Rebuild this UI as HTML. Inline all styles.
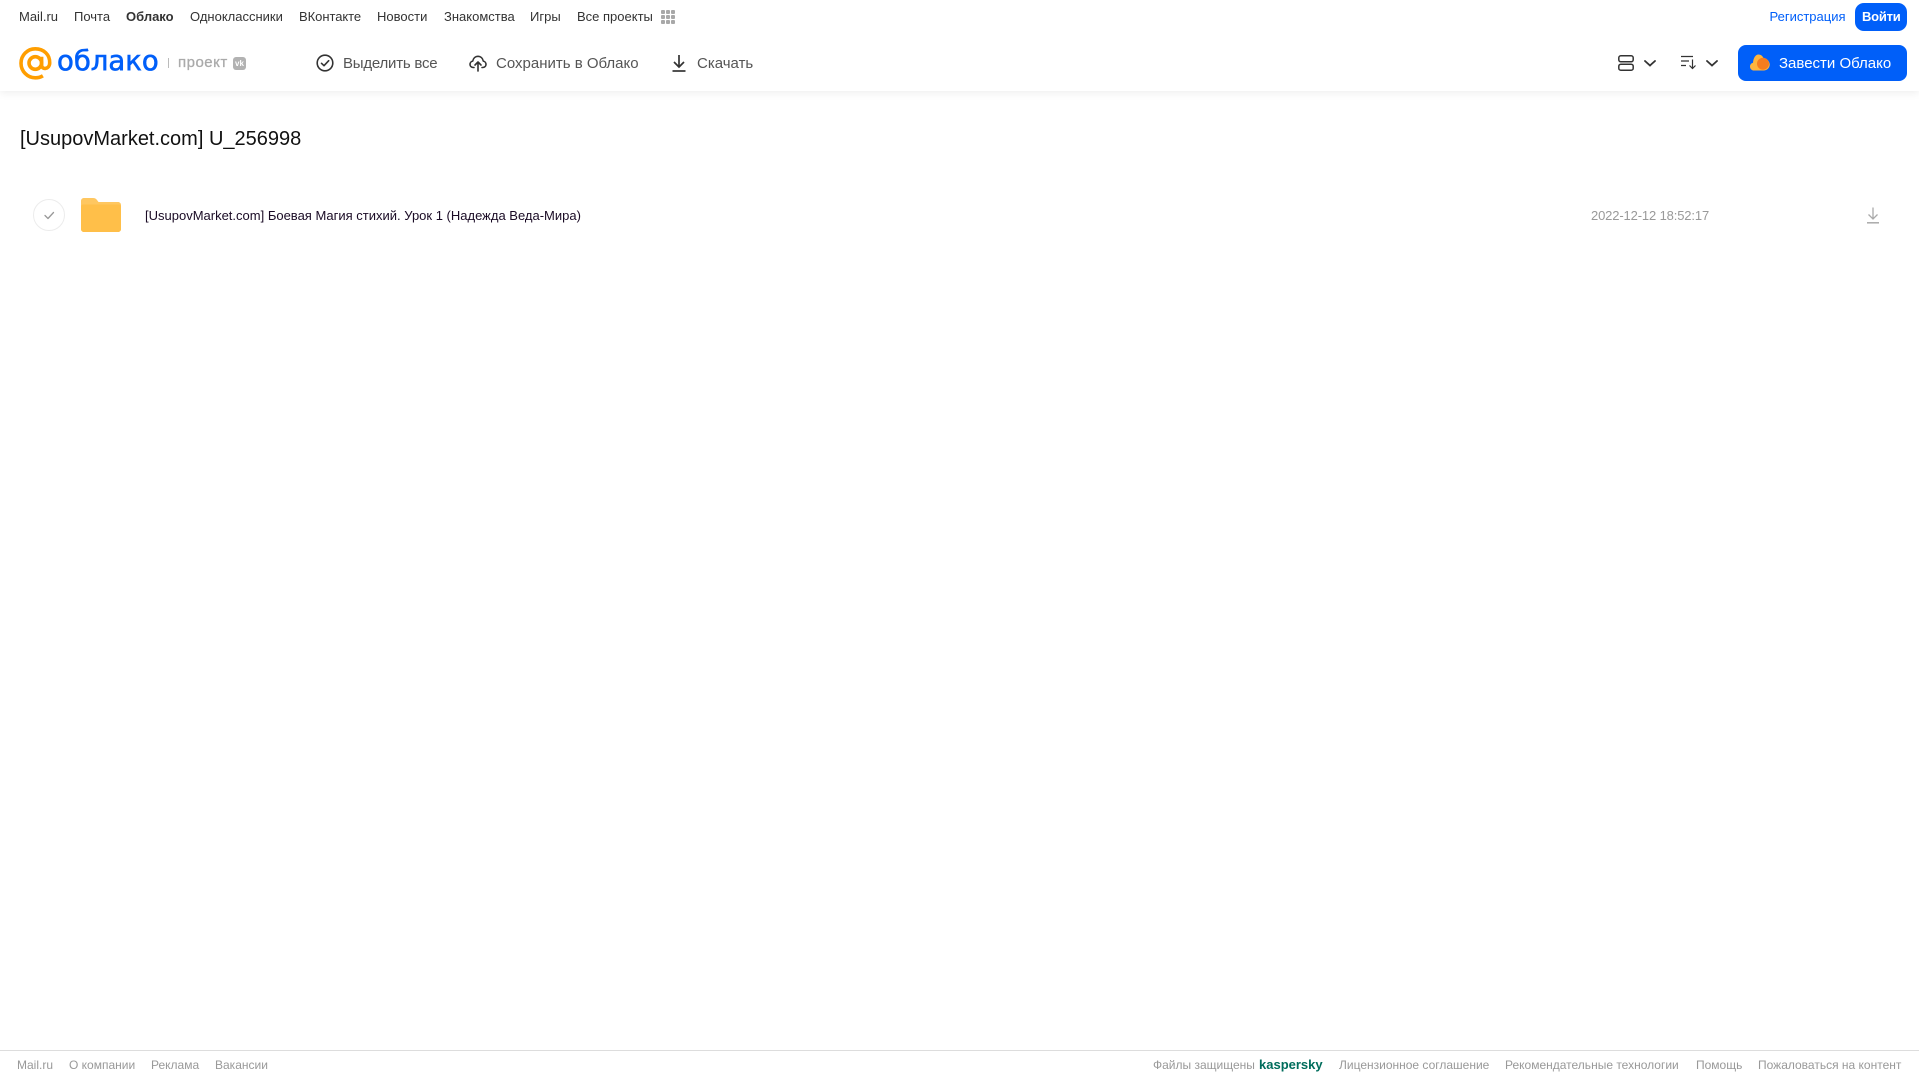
<!DOCTYPE html>
<html lang="ru"><head><meta charset="utf-8"><title>Облако</title>
<style>
html,body{margin:0;padding:0;background:#fff}
body{position:relative;width:1919px;height:1079px;overflow:hidden;font-family:"Liberation Sans",Arial,sans-serif}
.t{position:absolute;white-space:nowrap;line-height:20px;height:20px}
.n{top:7px;font-size:13px;color:#333}
.b{top:54px;font-size:15px;color:#555}
.f{top:1055px;font-size:12px;color:#999}
svg{position:absolute;display:block}
.hdr{position:absolute;left:0;top:0;width:1919px;height:91px;background:#fff;box-shadow:0 2px 8px rgba(0,0,0,.07)}
</style></head><body>
<div class="hdr"></div>
<span class="t n" style="left:19px">Mail.ru</span>
<span class="t n" style="left:74px">Почта</span>
<span class="t n" style="left:126px;font-weight:bold">Облако</span>
<span class="t n" style="left:190px">Одноклассники</span>
<span class="t n" style="left:299px;letter-spacing:-.05px">ВКонтакте</span>
<span class="t n" style="left:377px">Новости</span>
<span class="t n" style="left:444px">Знакомства</span>
<span class="t n" style="left:530px">Игры</span>
<span class="t n" style="left:577px">Все проекты</span>
<svg style="left:661px;top:10px" width="14" height="14" fill="#a8a8a8"><rect width="4" height="4" rx="1"/><rect x="5" width="4" height="4" rx="1"/><rect x="10" width="4" height="4" rx="1"/><rect y="5" width="4" height="4" rx="1"/><rect x="5" y="5" width="4" height="4" rx="1"/><rect x="10" y="5" width="4" height="4" rx="1"/><rect y="10" width="4" height="4" rx="1"/><rect x="5" y="10" width="4" height="4" rx="1"/><rect x="10" y="10" width="4" height="4" rx="1"/></svg>
<span class="t n" style="left:1769.500px;color:#005ff9">Регистрация</span>
<div style="position:absolute;left:1855px;top:3px;width:52px;height:28px;background:#005ff9;border-radius:9px"></div>
<span class="t n" style="left:1862px;color:#fff;font-weight:bold;top:7px;letter-spacing:-.25px">Войти</span>

<svg style="left:19px;top:47px" width="33" height="33" viewBox="0 0 33 33" fill="none" stroke="#ff9e00" stroke-width="3.6"><circle cx="16.3" cy="16" r="6.3"/><path d="M22.6 9.8v8.2c0 5.2 7.9 4.5 8.1-2 .3-8.400-6-14.200-14.400-14.200C8.400 1.800 2 8.200 2 16.200s6.400 14.600 14.300 14.600c2.900 0 5.400-.7 7.600-2"/></svg>
<span class="t" style="left:57px;top:44px;height:34px;line-height:34px;font-family:'DejaVu Sans',sans-serif;font-size:27.500px;color:#005ff9;-webkit-text-stroke:.6px #005ff9">облако</span>
<div style="position:absolute;left:168px;top:58px;width:1px;height:10px;background:#bbb"></div>
<span class="t" style="left:178px;top:53px;font-size:15px;letter-spacing:.5px;color:#aaa;-webkit-text-stroke:.3px #aaa">проект</span>
<div style="position:absolute;left:233px;top:57px;width:13px;height:13px;border-radius:3px;background:#b2b2b2;color:#fff;font:bold 8px/13px 'Liberation Sans',sans-serif;text-align:center">vk</div>

<svg style="left:316px;top:54px" width="18" height="18" viewBox="0 0 18 18" fill="none" stroke="#333" stroke-width="1.6"><circle cx="9" cy="9" r="7.800"/><path d="M5.500 9.300l2.500 2.400 4.700-5" stroke-linecap="round" stroke-linejoin="round"/></svg>
<span class="t b" style="left:343px;letter-spacing:-.22px">Выделить все</span>
<svg style="left:469px;top:54px" width="18" height="18" viewBox="0 0 18 18" fill="none" stroke="#333" stroke-width="1.600" stroke-linecap="round" stroke-linejoin="round"><path d="M5 13.500H4.300C2.400 13.500 1 12.100 1 10.300c0-1.600 1.200-2.900 2.700-3.200C4.300 4.200 6.400 2.300 9 2.300s4.700 1.900 5.300 4.800c1.500.3 2.700 1.600 2.700 3.200 0 1.800-1.400 3.200-3.300 3.200H13"/><path d="M9 17V8.500M6 11l3-3 3 3"/></svg>
<span class="t b" style="left:496px">Сохранить в Облако</span>
<svg style="left:671px;top:54px" width="16" height="18" viewBox="0 0 16 18" fill="none" stroke="#333" stroke-width="1.700"><path d="M8 1v11.500M3 8l5 5 5-5"/><path d="M1.500 17h13"/></svg>
<span class="t b" style="left:697px">Скачать</span>

<svg style="left:1618px;top:55px" width="16" height="16" viewBox="0 0 16 16" fill="none" stroke="#333" stroke-width="1.500"><rect x=".8" y=".8" width="14.400" height="6" rx="2"/><rect x=".8" y="9.200" width="14.400" height="6" rx="2"/></svg>
<svg style="left:1644px;top:60px" width="12" height="7" viewBox="0 0 12 7" fill="none" stroke="#333" stroke-width="1.800" stroke-linecap="round"><path d="M1 1l5 4.500L11 1"/></svg>
<svg style="left:1681px;top:55px" width="16" height="15" viewBox="0 0 16 15" fill="none" stroke="#333" stroke-width="1.200"><path d="M0 1.500h12M0 6h8M0 10.500h5"/><path d="M11.500 4.500v9M8.500 10.500l3 3 3-3"/></svg>
<svg style="left:1706px;top:60px" width="12" height="7" viewBox="0 0 12 7" fill="none" stroke="#333" stroke-width="1.800" stroke-linecap="round"><path d="M1 1l5 4.500L11 1"/></svg>

<div style="position:absolute;left:1738px;top:45px;width:169px;height:36px;background:#005ff9;border-radius:8px"></div>
<svg style="left:1750px;top:54px" width="20" height="17" viewBox="0 0 20 17"><path d="M4 16.500C1.800 16.500 0 14.800 0 12.600c0-1.900 1.200-3.400 3-3.800C3.300 4 5.500.5 8.500.5c2.300 0 4.200 1.500 5 3.700 3.300.2 6.200 3 6.200 6.300 0 3.300-2.700 6-6 6z" fill="#ffb53d"/><circle cx="13" cy="9.700" r="6" fill="#f57d20"/></svg>
<span class="t b" style="left:1779px;color:#fff">Завести Облако</span>

<span class="t" style="left:20px;top:127px;height:24px;line-height:24px;font-size:20px;color:#111">[UsupovMarket.com] U_256998</span>

<svg style="left:33px;top:198px" width="33" height="34" viewBox="0 0 33 34" fill="none"><circle cx="16" cy="17" r="15.500" stroke="#ececec"/><path d="M12 17.500l3 3 5.500-6" stroke="#999" stroke-width="1.300" stroke-linecap="round" stroke-linejoin="round"/></svg>
<svg style="left:81px;top:197px" width="40" height="35" viewBox="0 0 40 35"><path d="M0 4C0 2 1.500 1 3 1h9c2 0 3 .6 4 2l1.500 2H37c1.700 0 3 1.200 3 3v24c0 1.700-1.300 3-3 3H3c-1.700 0-3-1.300-3-3z" fill="#ffc760"/><path d="M0 9.500c0-1 1-2 2-2h36c1 0 2 1 2 2V32c0 1.700-1.300 3-3 3H3c-1.700 0-3-1.300-3-3z" fill="#ffbf49"/></svg>
<span class="t" style="left:145px;top:206px;font-size:13px;color:#1a0b25">[UsupovMarket.com] Боевая Магия стихий. Урок 1 (Надежда Веда-Мира)</span>
<span class="t" style="left:1591px;top:206px;font-size:13px;letter-spacing:-.14px;color:#999">2022-12-12 18:52:17</span>
<svg style="left:1866px;top:207px" width="14" height="17" viewBox="0 0 14 17" fill="none" stroke="#aaa" stroke-width="1.300"><path d="M7 .5v11M2.500 7.500L7 12l4.500-4.500"/><path d="M1 15.800h12" stroke-width="1.500"/></svg>

<div style="position:absolute;left:0;top:1050px;width:1919px;height:1px;background:#ddd"></div>
<span class="t f" style="left:17px">Mail.ru</span>
<span class="t f" style="left:69px">О компании</span>
<span class="t f" style="left:151px">Реклама</span>
<span class="t f" style="left:215px">Вакансии</span>
<span class="t f" style="left:1153px">Файлы защищены</span>
<span class="t f" style="left:1259px;color:#006d5c;font-weight:bold;font-size:13px">kaspersky</span>
<span class="t f" style="left:1339px">Лицензионное соглашение</span>
<span class="t f" style="left:1505px">Рекомендательные технологии</span>
<span class="t f" style="left:1696px">Помощь</span>
<span class="t f" style="left:1758px">Пожаловаться на контент</span>
</body></html>
